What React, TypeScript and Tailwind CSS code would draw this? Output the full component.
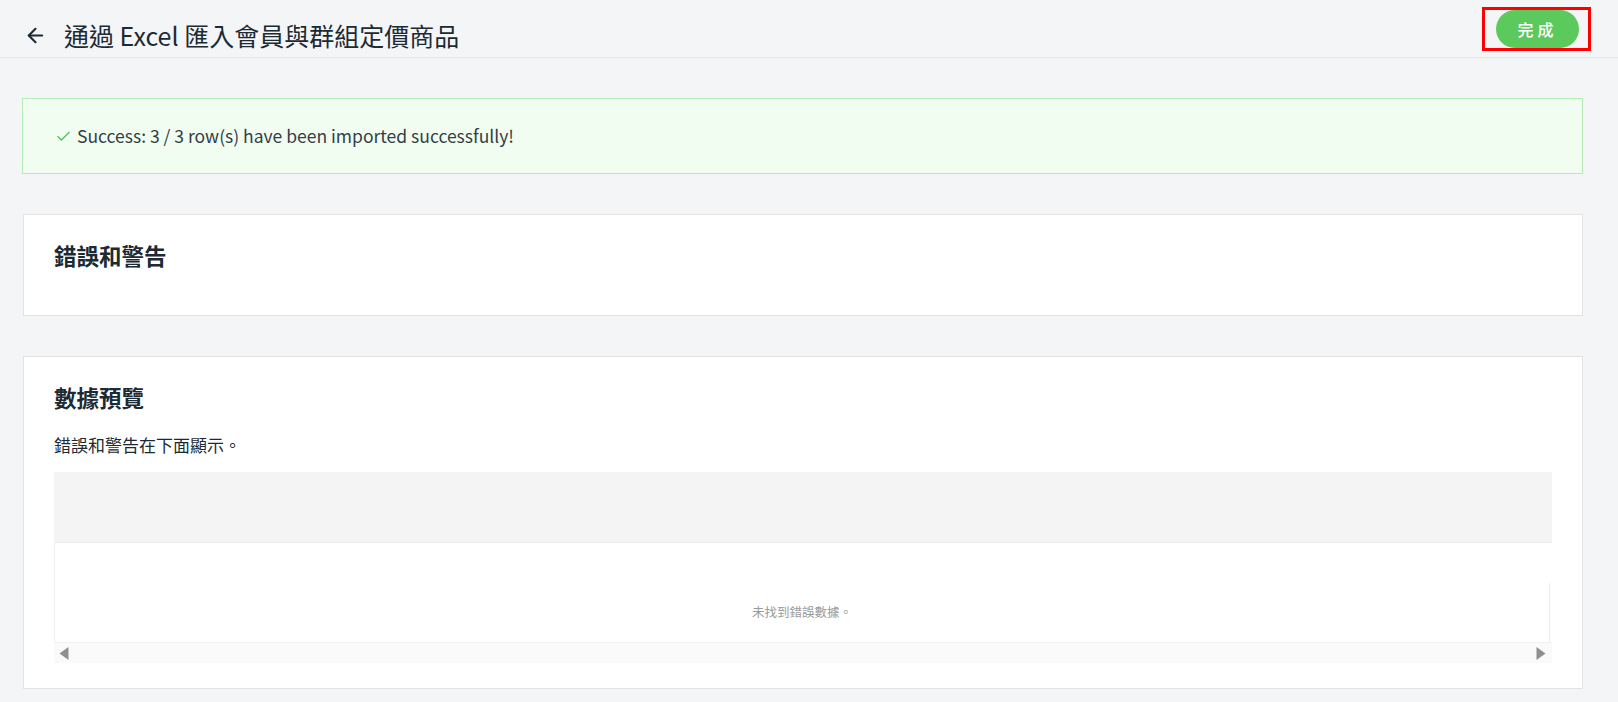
import { ArrowLeft, Check } from "lucide-react";

const font = { fontFamily: '"Noto Sans CJK TC", "Noto Sans", sans-serif' };

export default function App() {
  return (
    <div className="min-h-[702px] w-full bg-[#f4f5f7] text-[#1c2a33]" style={font}>
      {/* header */}
      <header className="flex h-[58px] items-start justify-between border-b border-[#e3e5e8] pl-[24px] pr-[27px]">
        <div className="mt-[18px] flex h-[34px] items-center gap-[17px]">
          <ArrowLeft className="h-[23px] w-[23px] text-[#1c2a33]" strokeWidth={2.2} />
          <h1 className="text-[25px] leading-[34px] font-normal text-[#1c2a33]">
            通過 Excel 匯入會員與群組定價商品
          </h1>
        </div>
        <div className="mt-[7px] border-[3px] border-[#ff0000] pl-[11px] pr-[9px]">
          <button className="flex h-[38px] w-[83px] items-center justify-center rounded-full bg-[#5bc95b] text-[16px] font-medium tracking-[4px] text-white">
            完成
          </button>
        </div>
      </header>

      <main className="flex flex-col gap-[40px] pl-[22px] pr-[35px] pt-[40px] pb-[12px]">
        {/* success alert */}
        <div className="flex h-[76px] items-center gap-[5px] border border-[#b5ecb5] bg-[#f1fdf1] pl-[32px]">
          <Check className="h-[17px] w-[17px] text-[#52c462]" strokeWidth={2} />
          <span className="text-[17.5px] text-[#333d46]">
            Success: 3 / 3 row(s) have been imported successfully!
          </span>
        </div>

        {/* errors and warnings */}
        <section className="ml-[1px] h-[102px] border border-[#e3e3e3] bg-white px-[30px] pt-[25px]">
          <h2 className="text-[22.5px] leading-[30px] font-semibold text-[#1c2a33]">錯誤和警告</h2>
        </section>

        {/* data preview */}
        <section className="ml-[1px] border border-[#e3e3e3] bg-white px-[30px] pt-[25px] pb-[25px]">
          <h2 className="text-[22.5px] leading-[30px] font-semibold text-[#1c2a33]">數據預覽</h2>
          <p className="mt-[22px] text-[17px] leading-[22px] text-[#1c2a33]">錯誤和警告在下面顯示。</p>
          <div className="mt-[16px]">
            <div className="h-[71px] border-b border-[#ececec] bg-[#f4f4f4]" />
            <div className="flex h-[100px] border-b border-l border-[#f0f0f0]">
              <div className="flex flex-1 items-start justify-center pt-[61px]">
                <span className="text-[12.5px] leading-[16px] text-[#9a9a9a]">未找到錯誤數據。</span>
              </div>
              <div className="mt-[40px] mr-[2px] w-px bg-[#ececec]" />
            </div>
            <div className="flex h-[20px] items-center justify-between bg-[#fafafa] pl-[5px] pr-[6px]">
              <svg width="10" height="13" viewBox="0 0 10 13">
                <path d="M9.5 0 L0.5 6.5 L9.5 13 Z" fill="#8f8f8f" />
              </svg>
              <svg width="10" height="13" viewBox="0 0 10 13">
                <path d="M0.5 0 L9.5 6.5 L0.5 13 Z" fill="#8f8f8f" />
              </svg>
            </div>
          </div>
        </section>
      </main>
    </div>
  );
}
